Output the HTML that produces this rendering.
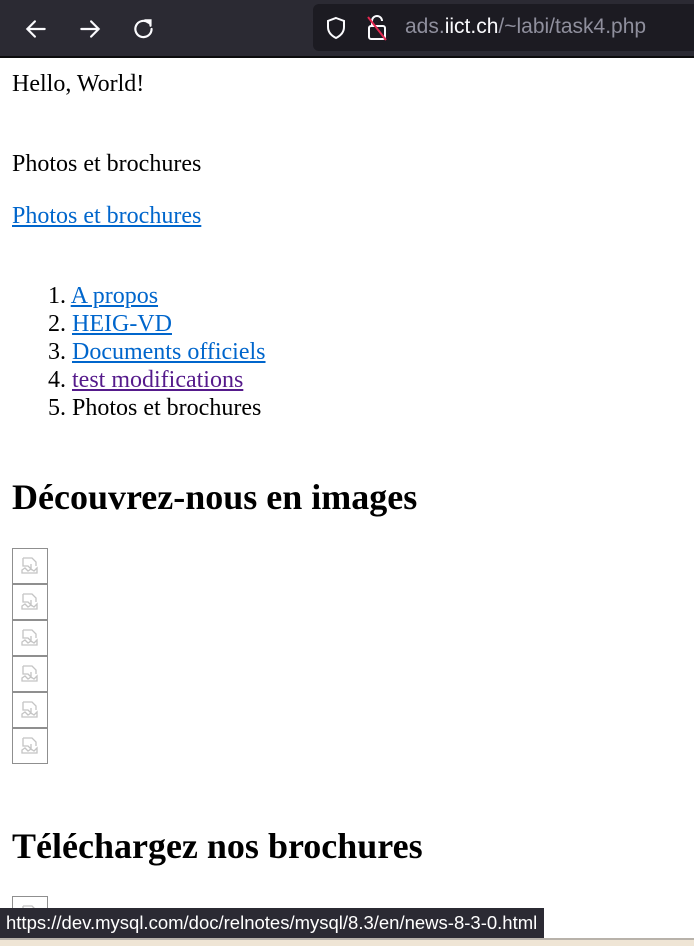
<!DOCTYPE html>
<html><head><meta charset="utf-8"><style>
*{margin:0;padding:0;box-sizing:border-box}
body{width:694px;height:946px;overflow:hidden;background:#fff;position:relative;font-family:"Liberation Serif",serif;font-size:24px;color:#000}
.bar{position:absolute;left:0;top:0;width:694px;height:58px;background:#2b2a33;border-bottom:2px solid #0c0c0d}
.url{position:absolute;left:313px;top:4px;width:400px;height:47px;background:#1c1b22;border-radius:6px}
.t{position:absolute;left:12px;top:0;line-height:28px;white-space:nowrap}
a{color:#0066cc;text-decoration:underline}
a.v{color:#551a8b}
.n{position:absolute;left:48px;line-height:28px;white-space:nowrap}
h2{position:absolute;left:12px;font-size:36px;font-weight:bold;line-height:41px;white-space:nowrap}
.img{position:absolute;left:12px;width:36px;height:36px;border:1px solid #8f8f8f;background:#fff}
.img svg{position:absolute;left:8px;top:7px}
.status{position:absolute;left:0;top:908px;width:544px;height:30px;background:#2b2a33;color:#fff;font-family:"Liberation Sans",sans-serif;font-size:18.5px;line-height:30px;padding-left:6px;white-space:nowrap}
.bot{position:absolute;left:0;top:938px;width:694px;height:8px;background:#efe5d5;border-top:2px solid #b8b2aa}
</style></head><body>
<div class="bar">
<svg style="position:absolute;left:23px;top:16px" width="26" height="26" viewBox="0 0 24 24" fill="none" stroke="#fbfbfe" stroke-width="2" stroke-linecap="round"><path d="M20 12H4M11 5l-7 7 7 7"/></svg>
<svg style="position:absolute;left:77px;top:16px" width="26" height="26" viewBox="0 0 24 24" fill="none" stroke="#fbfbfe" stroke-width="2" stroke-linecap="round"><path d="M4 12h16M13 5l7 7-7 7"/></svg>
<svg style="position:absolute;left:131px;top:16px" width="26" height="26" viewBox="0 0 24 24" fill="none" stroke="#fbfbfe" stroke-width="2" stroke-linecap="round"><path d="M19 12a7.5 7.5 0 1 1-3-6"/><path d="M13 4h5v5" fill="#fbfbfe"/></svg>
<div class="url">
<svg style="position:absolute;left:12px;top:12px" width="22" height="24" viewBox="0 0 22 24" fill="none" stroke="#fbfbfe" stroke-width="2"><path d="M11 2l8 3v6c0 6-4 9-8 11-4-2-8-5-8-11V5z"/></svg>
<svg style="position:absolute;left:52px;top:10px" width="24" height="28" viewBox="0 0 24 28" fill="none" stroke="#fbfbfe" stroke-width="2"><path d="M7 12V7a5 5 0 0 1 10 0"/><rect x="4" y="12" width="16" height="13" rx="2"/><path d="M3 3l18 23" stroke="#e22850"/></svg>
<span style="position:absolute;left:92px;top:11px;font-family:'Liberation Sans',sans-serif;font-size:21px;color:#8f8f9d;white-space:nowrap">ads.<span style="color:#fbfbfe">iict.ch</span>/~labi/task4.php</span>
</div>
</div>
<div class="t" style="top:70px">Hello, World!</div>
<div class="t" style="top:150px">Photos et brochures</div>
<div class="t" style="top:202px"><a>Photos et brochures</a></div>
<div class="n" style="top:282px">1. <a>A propos</a></div>
<div class="n" style="top:310px">2. <a>HEIG-VD</a></div>
<div class="n" style="top:338px">3. <a>Documents officiels</a></div>
<div class="n" style="top:366px">4. <a class="v">test modifications</a></div>
<div class="n" style="top:394px">5. Photos et brochures</div>
<h2 style="top:477px">Découvrez-nous en images</h2>
<div class="img" style="top:548px"><svg width="20" height="20" viewBox="0 0 20 20" fill="none" stroke="#c4c4c4" stroke-width="1.3"><path d="M2 2h9l4 4v4M2 2v8h5l3 3V8M1 14l3-2 3 3 3-2 3 2 3-3v5H1z"/></svg></div>
<div class="img" style="top:584px"><svg width="20" height="20" viewBox="0 0 20 20" fill="none" stroke="#c4c4c4" stroke-width="1.3"><path d="M2 2h9l4 4v4M2 2v8h5l3 3V8M1 14l3-2 3 3 3-2 3 2 3-3v5H1z"/></svg></div>
<div class="img" style="top:620px"><svg width="20" height="20" viewBox="0 0 20 20" fill="none" stroke="#c4c4c4" stroke-width="1.3"><path d="M2 2h9l4 4v4M2 2v8h5l3 3V8M1 14l3-2 3 3 3-2 3 2 3-3v5H1z"/></svg></div>
<div class="img" style="top:656px"><svg width="20" height="20" viewBox="0 0 20 20" fill="none" stroke="#c4c4c4" stroke-width="1.3"><path d="M2 2h9l4 4v4M2 2v8h5l3 3V8M1 14l3-2 3 3 3-2 3 2 3-3v5H1z"/></svg></div>
<div class="img" style="top:692px"><svg width="20" height="20" viewBox="0 0 20 20" fill="none" stroke="#c4c4c4" stroke-width="1.3"><path d="M2 2h9l4 4v4M2 2v8h5l3 3V8M1 14l3-2 3 3 3-2 3 2 3-3v5H1z"/></svg></div>
<div class="img" style="top:728px"><svg width="20" height="20" viewBox="0 0 20 20" fill="none" stroke="#c4c4c4" stroke-width="1.3"><path d="M2 2h9l4 4v4M2 2v8h5l3 3V8M1 14l3-2 3 3 3-2 3 2 3-3v5H1z"/></svg></div>
<h2 style="top:826px">Téléchargez nos brochures</h2>
<div class="img" style="top:896px"><svg width="20" height="20" viewBox="0 0 20 20" fill="none" stroke="#c4c4c4" stroke-width="1.3"><path d="M2 2h9l4 4v4M2 2v8h5l3 3V8M1 14l3-2 3 3 3-2 3 2 3-3v5H1z"/></svg></div>
<div class="status">https://dev.mysql.com/doc/relnotes/mysql/8.3/en/news-8-3-0.html</div>
<div class="bot"></div>
</body></html>
